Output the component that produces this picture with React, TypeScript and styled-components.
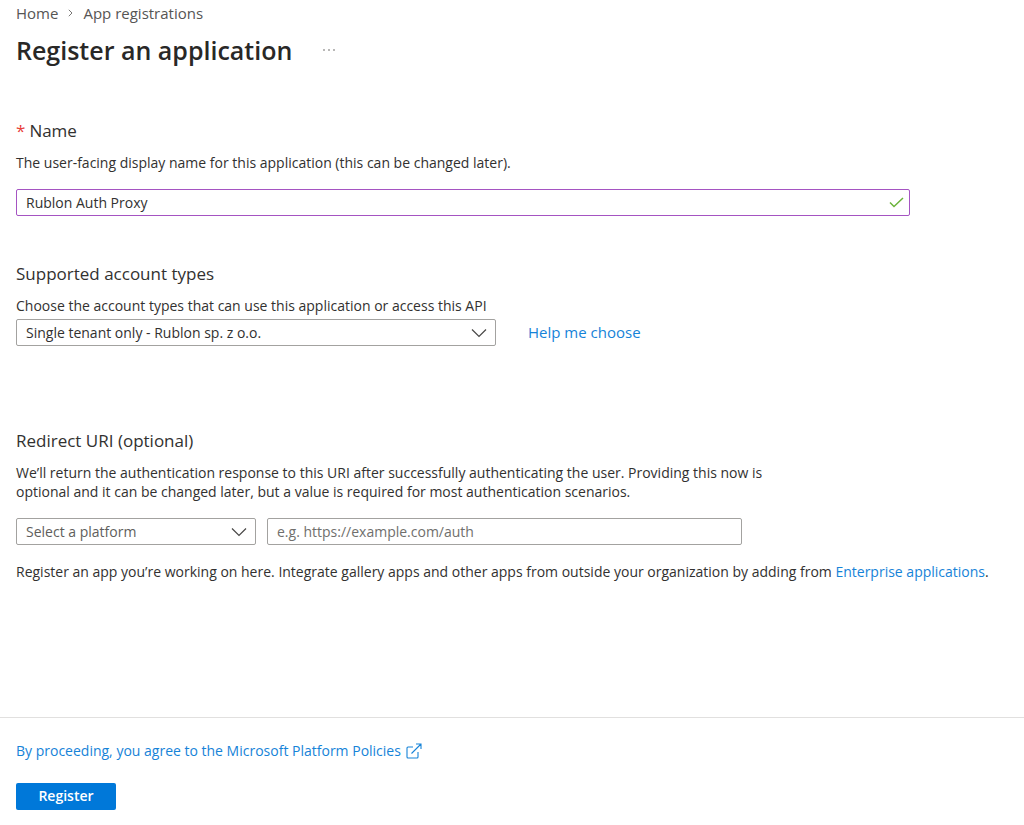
import React from "react";
import styled, { createGlobalStyle } from "styled-components";

const GlobalStyle = createGlobalStyle`
  *, *::before, *::after { box-sizing: border-box; }
  body {
    margin: 0;
    background: #ffffff;
    color: #323130;
    font-family: "Open Sans", "Noto Sans", sans-serif;
    font-size: 14px;
    line-height: 19px;
  }
  input, select, button { font: inherit; }
`;

const Page = styled.form`
  display: flex;
  flex-direction: column;
  min-height: 100vh;
`;

const Header = styled.header`
  padding: 3px 16px 0;
`;

const Breadcrumb = styled.nav`
  display: flex;
  align-items: center;
  gap: 10px;
  height: 20px;
  font-size: 15px;
`;

const Crumb = styled.a`
  color: #565554;
  text-decoration: none;
`;

const TitleRow = styled.div`
  display: flex;
  align-items: center;
  gap: 30px;
  margin-top: 9px;
`;

const Title = styled.h1`
  margin: 0;
  color: #292827;
  font-size: 25px;
  font-weight: 600;
  line-height: 36px;
`;

const MoreButton = styled.button`
  display: flex;
  padding: 0;
  border: 0;
  background: none;
  color: #605e5c;
`;

const Main = styled.main`
  padding: 0 16px;
`;

const Section = styled.section<{ $gap: number }>`
  margin-top: ${({ $gap }) => $gap}px;
`;

const Heading = styled.h2`
  display: flex;
  gap: 4px;
  margin: 0 0 10px;
  font-size: 17px;
  font-weight: 400;
  line-height: 24px;
`;

const Required = styled.span`
  color: #e8403a;
`;

const Text = styled.p<{ $after?: number; $width?: number }>`
  margin: 0 0 ${({ $after = 0 }) => $after}px;
  max-width: ${({ $width }) => ($width ? `${$width}px` : "none")};
`;

const Fields = styled.div<{ $gap: number }>`
  display: flex;
  align-items: center;
  gap: ${({ $gap }) => $gap}px;
`;

const Control = styled.div<{ $width: number; $inset: number }>`
  display: grid;
  align-items: center;
  flex: 0 1 ${({ $width }) => $width}px;
  min-width: 0;

  > * { grid-area: 1 / 1; }
  > svg {
    justify-self: end;
    margin-right: ${({ $inset }) => $inset}px;
    pointer-events: none;
  }
`;

const TextBox = styled.input<{ $edited?: boolean }>`
  width: 100%;
  height: 27px;
  padding: 0 9px;
  border: 1px solid ${({ $edited }) => ($edited ? "#a554c2" : "#a3a2a0")};
  border-radius: 2px;
  background: #ffffff;
  color: #323130;
  outline: none;

  &::placeholder { color: #706f6d; opacity: 1; }
`;

const Select = styled.select<{ $empty?: boolean }>`
  width: 100%;
  height: 27px;
  padding: 0 36px 0 9px;
  border: 1px solid #a3a2a0;
  border-radius: 2px;
  background: #ffffff;
  color: ${({ $empty }) => ($empty ? "#605e5c" : "#323130")};
  appearance: none;
`;

const Link = styled.a<{ $large?: boolean }>`
  color: #1683d8;
  font-size: ${({ $large }) => ($large ? 15 : 14)}px;
  text-decoration: none;
`;

const IconLink = styled(Link)`
  display: inline-flex;
  align-items: center;
  gap: 5px;
`;

const Footer = styled.footer`
  display: flex;
  flex-direction: column;
  align-items: flex-start;
  gap: 23px;
  margin-top: auto;
  padding: 23px 16px 15px;
  border-top: 1px solid #e1e0df;
`;

const PrimaryButton = styled.button`
  width: 100px;
  height: 27px;
  padding: 0 0 2px;
  border: 0;
  border-radius: 2px;
  background: #0078d9;
  color: #ffffff;
  font-weight: 600;
`;

const Chevron = () => (
  <svg width="16" height="10" viewBox="0 0 16 10" fill="none" stroke="#484746" strokeWidth="1.2" aria-hidden="true">
    <path d="M1 1.5l7 7 7-7" />
  </svg>
);

export default function App() {
  return (
    <Page onSubmit={(event: React.FormEvent) => event.preventDefault()}>
      <GlobalStyle />
      <Header>
        <Breadcrumb aria-label="Breadcrumb">
          <Crumb href="#home">Home</Crumb>
          <svg width="5" height="8" viewBox="0 0 5 8" fill="none" stroke="#797775" aria-hidden="true">
            <path d="M.8.8L4 4 .8 7.2" />
          </svg>
          <Crumb href="#registrations">App registrations</Crumb>
        </Breadcrumb>
        <TitleRow>
          <Title>Register an application</Title>
          <MoreButton type="button" aria-label="More actions">
            <svg width="14" height="4" viewBox="0 0 14 4" fill="currentColor" aria-hidden="true">
              <circle cx="2" cy="2" r=".8" />
              <circle cx="7" cy="2" r=".8" />
              <circle cx="12" cy="2" r=".8" />
            </svg>
          </MoreButton>
        </TitleRow>
      </Header>

      <Main>
        <Section $gap={51}>
          <Heading>
            <Required aria-hidden="true">*</Required>
            <label htmlFor="name">Name</label>
          </Heading>
          <Text $after={17}>The user-facing display name for this application (this can be changed later).</Text>
          <Fields $gap={0}>
            <Control $width={894} $inset={6}>
              <TextBox id="name" type="text" defaultValue="Rublon Auth Proxy" required $edited />
              <svg width="15" height="11" viewBox="0 0 15 11" fill="none" stroke="#6bb33a" strokeWidth="1.5" aria-hidden="true">
                <path d="M1 5.5l4 4L14 1" />
              </svg>
            </Control>
          </Fields>
        </Section>

        <Section $gap={46}>
          <Heading>Supported account types</Heading>
          <Text $after={4}>
            <label htmlFor="accounts">Choose the account types that can use this application or access this API</label>
          </Text>
          <Fields $gap={32}>
            <Control $width={480} $inset={9}>
              <Select id="accounts">
                <option>Single tenant only - Rublon sp. z o.o.</option>
              </Select>
              <Chevron />
            </Control>
            <Link href="#help" $large>Help me choose</Link>
          </Fields>
        </Section>

        <Section $gap={83}>
          <Heading>Redirect URI (optional)</Heading>
          <Text $after={17} $width={750}>
            We’ll return the authentication response to this URI after successfully authenticating the user. Providing this now is
            optional and it can be changed later, but a value is required for most authentication scenarios.
          </Text>
          <Fields $gap={11}>
            <Control $width={240} $inset={9}>
              <Select aria-label="Platform" $empty>
                <option>Select a platform</option>
              </Select>
              <Chevron />
            </Control>
            <Control $width={475} $inset={0}>
              <TextBox type="url" aria-label="Redirect URI" placeholder="e.g. https://example.com/auth" />
            </Control>
          </Fields>
        </Section>

        <Section $gap={17}>
          <Text>
            Register an app you’re working on here. Integrate gallery apps and other apps from outside your organization by adding from{" "}
            <Link href="#enterprise">Enterprise applications</Link>.
          </Text>
        </Section>
      </Main>

      <Footer>
        <IconLink href="#policies">
          By proceeding, you agree to the Microsoft Platform Policies
          <svg width="16" height="16" viewBox="0 0 16 16" fill="none" stroke="currentColor" strokeWidth="1.1" aria-hidden="true">
            <path d="M7 4H2Q1 4 1 5v9q0 1 1 1h9q1 0 1-1V9M5.5 10.5L15 1M10 1h5v5" />
          </svg>
        </IconLink>
        <PrimaryButton type="submit">Register</PrimaryButton>
      </Footer>
    </Page>
  );
}
